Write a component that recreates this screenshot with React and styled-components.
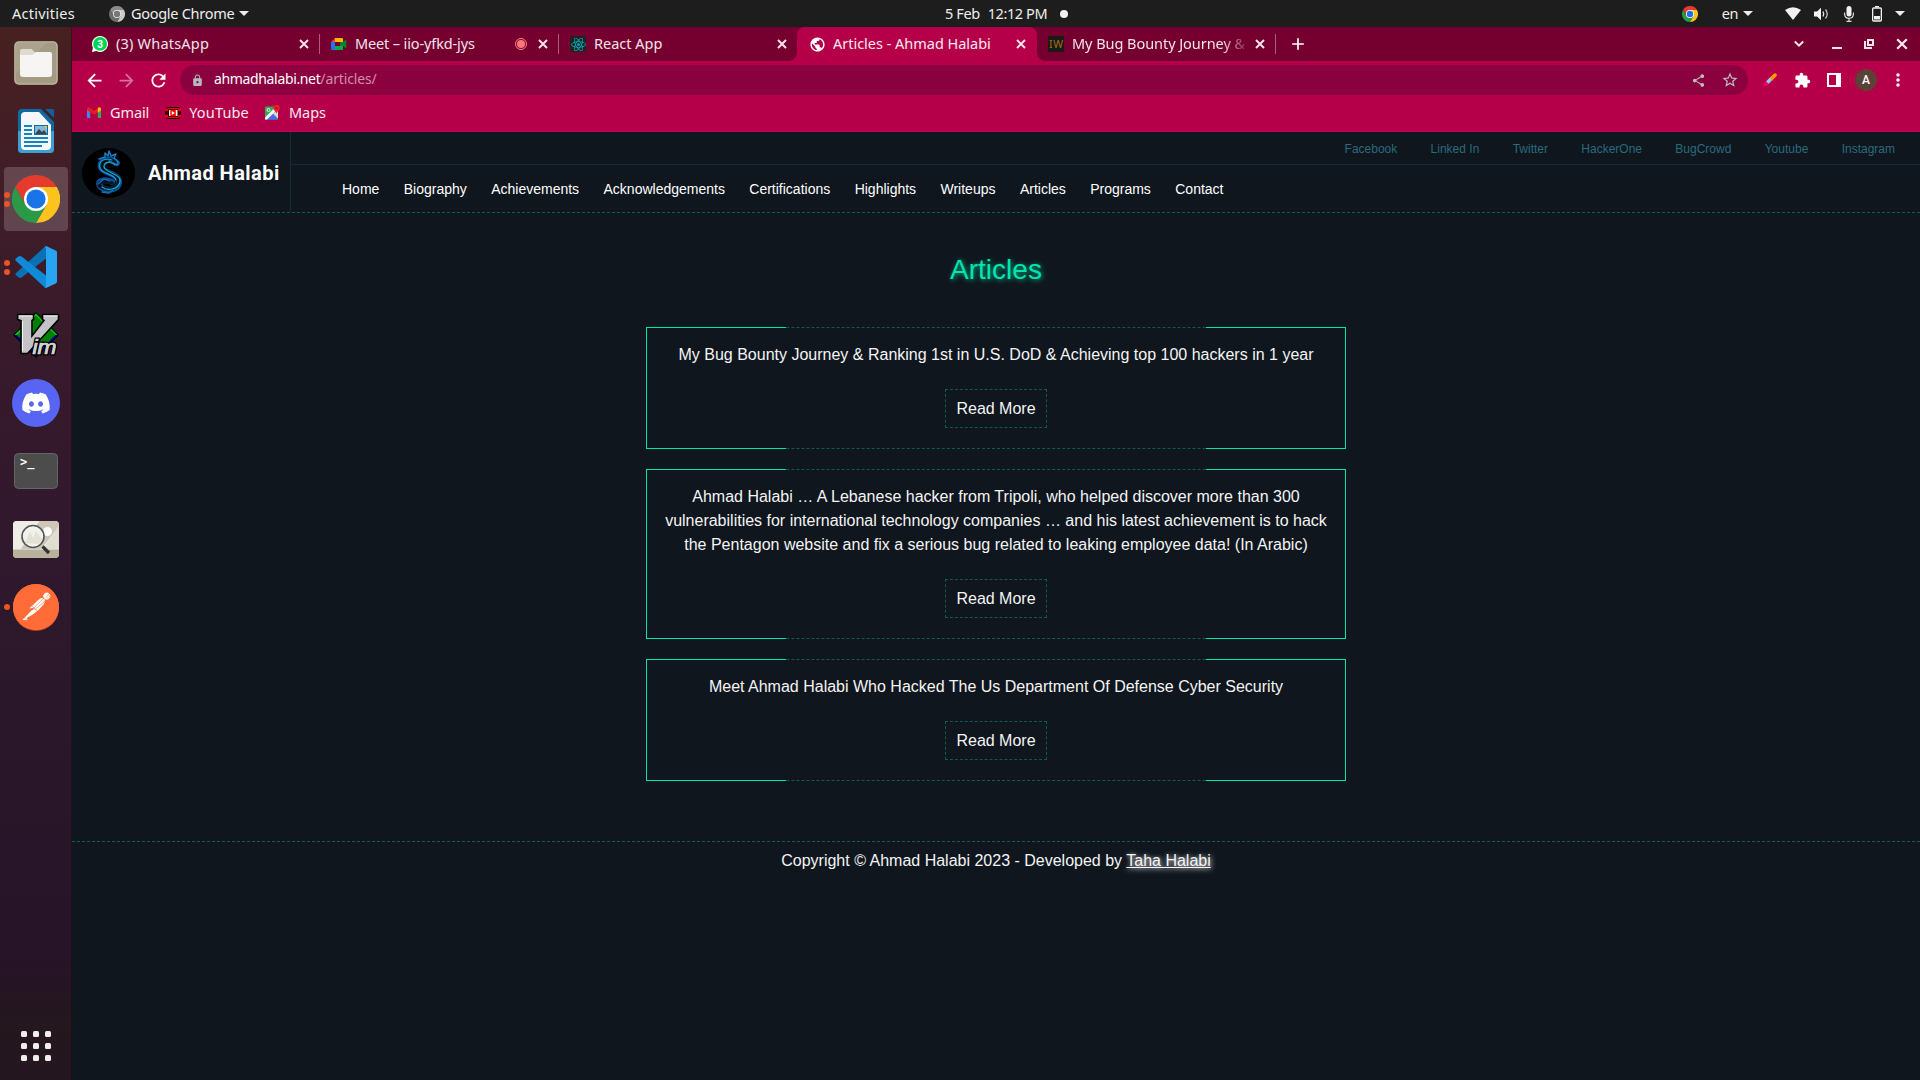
import React from "react";
import styled, { createGlobalStyle, css } from "styled-components";
import {
  MdArrowBack, MdArrowForward, MdRefresh, MdLock, MdShare, MdStarBorder,
  MdExtension, MdMoreVert, MdPublic, MdAdd,
} from "react-icons/md";
import { FaDiscord, FaReact } from "react-icons/fa";
import { SiPostman } from "react-icons/si";

const Global = createGlobalStyle`
  *, *::before, *::after { box-sizing: border-box; }
  html, body { margin: 0; padding: 0; background: #0f161e; overflow: hidden; }
  svg { display: block; flex: none; }
`;

const uiFont = css`
  font-family: "Noto Sans", "Open Sans", sans-serif;
  font-size: ${(p) => p.$size || 14.5}px;
  line-height: 20px;
  padding-bottom: 2px;
  white-space: pre;
`;

const Desktop = styled.div`
  width: 1920px;
  height: 1080px;
  display: flex;
  flex-direction: column;
  overflow: hidden;
`;

/* ---------- system bar ---------- */
const TopBar = styled.header`
  height: 27px;
  flex: none;
  display: flex;
  align-items: center;
  background: #1d1d1d;
  color: #eeeeec;
  padding-left: 12px;
  padding-right: 15px;
`;
const BarLeft = styled.div`
  width: 933px;
  display: flex;
  align-items: center;
`;
const Label = styled.span`
  ${uiFont}
  letter-spacing: ${(p) => p.$track || 0}px;
  margin-left: ${(p) => p.$left || 0}px;
`;
const Host = styled(Label)`
  color: #fff;
`;
const Glyph = styled.span`
  flex: none;
  display: flex;
  margin-left: ${(p) => p.$left || 0}px;
`;
const Triangle = styled.span`
  border: 5px solid transparent;
  border-top-color: #eeeeec;
  border-bottom: 0;
  margin-left: ${(p) => p.$left}px;
`;
const BusyDot = styled.span`
  width: 8px;
  height: 8px;
  border-radius: 50%;
  background: #f2f2f2;
  margin-left: 13px;
`;
const Tray = styled.div`
  margin-left: auto;
  display: flex;
  align-items: center;
`;

/* ---------- dock ---------- */
const Workspace = styled.div`
  flex: 1;
  display: flex;
  min-height: 0;
`;
const Dock = styled.nav`
  width: 72px;
  flex: none;
  padding: 4px 0 11px 4px;
  display: flex;
  flex-direction: column;
  gap: 4px;
  background: linear-gradient(#47201f 0, #421e27 12%, #381a2b 30%, #30182d 50%, #2a172a 65%, #271428 88%, #24171e 94%, #23161e 100%);
  border-right: 1px solid rgba(20, 8, 20, 0.45);
`;
const DockItem = styled.div`
  width: 64px;
  height: 64px;
  border-radius: 4px;
  position: relative;
  display: flex;
  align-items: center;
  justify-content: center;
  background: ${(p) => (p.$active ? "rgba(255,255,255,0.18)" : "transparent")};
`;
const Running = styled.span`
  position: absolute;
  left: 0;
  top: 0;
  height: 64px;
  display: flex;
  flex-direction: column;
  justify-content: center;
  gap: 3px;
`;
const RunDot = styled.i`
  width: 6px;
  height: 6px;
  border-radius: 50%;
  background: #e95420;
`;
const AppGrid = styled.div`
  margin: auto 0 8px 17px;
  display: grid;
  grid-template-columns: repeat(3, 6px);
  gap: 6px;
`;
const AppGridDot = styled.i`
  height: 6px;
  border-radius: 1.5px;
  background: #f0efec;
`;
const DiscordDisc = styled.div`
  width: 48px;
  height: 48px;
  border-radius: 50%;
  background: #5865f2;
  color: #fff;
  display: flex;
  align-items: center;
  justify-content: center;
`;
const PostmanDisc = styled.div`
  width: 46px;
  height: 46px;
  margin-bottom: 1px;
  border-radius: 50%;
  background: radial-gradient(#fff 62%, #ff6c37 63%);
  color: #ff6c37;
  box-shadow: 0 1px 0 #b9431b;
`;

/* ---------- browser ---------- */
const Browser = styled.main`
  flex: 1;
  min-width: 0;
  display: flex;
  flex-direction: column;
`;
const TabStrip = styled.div`
  height: 34px;
  flex: none;
  display: flex;
  background: #75002f;
  padding-left: 9px;
`;
const Tab = styled.div`
  width: 239px;
  height: 34px;
  padding: 0 8px 0 11px;
  display: flex;
  align-items: center;
  position: relative;
  color: ${(p) => (p.$active ? "#fbe9f0" : "#f3e3ea")};
  background: ${(p) => (p.$active ? "#b50049" : "transparent")};
  border-radius: 8px 8px 0 0;
  ${(p) =>
    p.$active &&
    css`
      margin-left: -1px;
      width: 240px;
      padding-left: 12px;
      &::before,
      &::after {
        content: "";
        position: absolute;
        bottom: 0;
        width: 8px;
        height: 8px;
      }
      &::before {
        left: -8px;
        background: radial-gradient(circle at 0 0, transparent 7.5px, #b50049 8px);
      }
      &::after {
        right: -8px;
        background: radial-gradient(circle at 100% 0, transparent 7.5px, #b50049 8px);
      }
    `}
  ${(p) =>
    p.$divider &&
    css`
      &::after {
        content: "";
        position: absolute;
        right: 0;
        top: 7px;
        width: 1px;
        height: 20px;
        background: #ab5d7e;
      }
    `}
`;
const TabTitle = styled.span`
  ${uiFont}
  flex: 1;
  min-width: 0;
  overflow: hidden;
  margin-left: 8px;
  letter-spacing: ${(p) => p.$track || 0}px;
  ${(p) =>
    p.$fade &&
    css`
      mask-image: linear-gradient(to right, #000 150px, rgba(0, 0, 0, 0.15) 174px);
    `}
`;
const Favicon = styled.span`
  width: 16px;
  height: 16px;
  flex: none;
  display: flex;
  align-items: center;
  justify-content: center;
  border-radius: ${(p) => p.$round || 0}px;
  background: ${(p) => p.$bg || "transparent"};
  color: ${(p) => p.$color || "#fff"};
`;
const IconCell = styled.span`
  width: 16px;
  height: 16px;
  display: flex;
  align-items: center;
  justify-content: center;
`;
const WindowButtons = styled.div`
  margin-left: auto;
  display: flex;
  align-items: center;
  padding-right: 12px;
`;
const NewTab = styled.div`
  display: flex;
  align-items: center;
  margin-left: 12px;
`;
const Toolbar = styled.div`
  height: 38px;
  flex: none;
  background: #b50049;
  display: flex;
  align-items: center;
  gap: 6px;
  padding: 0 6px;
`;
const ButtonGroup = styled.div`
  display: flex;
`;
const IconButton = styled.span`
  width: 32px;
  height: 30px;
  display: flex;
  align-items: center;
  justify-content: center;
  color: ${(p) => p.$color || "#fff"};
`;
const Omnibox = styled.div`
  flex: 1;
  height: 30px;
  border-radius: 15px;
  background: #8b003f;
  display: flex;
  align-items: center;
  padding: 0 2px 0 11px;
`;
const Path = styled.span`
  ${uiFont}
  color: #cf8fab;
  flex: 1;
  letter-spacing: -0.14px;
`;
const Avatar = styled.span`
  width: 22px;
  height: 22px;
  border-radius: 50%;
  background: #5d4037;
  color: #fff;
  font: 500 12px/22px Roboto, sans-serif;
  text-align: center;
`;
const PanelIcon = styled.span`
  width: 14px;
  height: 14px;
  border: 2px solid #fff;
  border-right-width: 5px;
`;
const Bookmarks = styled.div`
  height: 33px;
  flex: none;
  display: flex;
  align-items: center;
  padding: 0 0 5px 14px;
  background: #b50049;
  border-bottom: 1px solid #c4005f;
  color: #fbe9f0;
`;

/* ---------- site ---------- */
const Site = styled.div`
  flex: 1;
  background: #0f161e;
  color: #f4f4f4;
  font: 16px/24px "Liberation Sans", Arial, sans-serif;
`;
const SiteHeader = styled.header`
  height: 81px;
  display: flex;
  border-bottom: 1px dashed #0c5a50;
`;
const Brand = styled.div`
  width: 219px;
  border-right: 1px solid #1a2a35;
  display: flex;
  align-items: center;
  padding: 2px 0 0 10px;
`;
const BrandName = styled.span`
  margin-left: 13px;
  font: 700 20px/24px Roboto, sans-serif;
  letter-spacing: ${(p) => p.$track}px;
  color: #fff;
  white-space: nowrap;
`;
const HeaderRight = styled.div`
  flex: 1;
  display: flex;
  flex-direction: column;
`;
const Socials = styled.div`
  height: 33px;
  border-bottom: 1px solid #152a35;
  display: flex;
  justify-content: flex-end;
  align-items: center;
  gap: 33.33px;
  padding: 2px 25px 0 0;
  font-size: 12px;
  color: #296b7c;
`;
const Menu = styled.nav`
  flex: 1;
  display: flex;
  align-items: center;
  gap: 24.4px;
  padding: 0 0 0 51px;
  font-size: 14px;
  color: #fff;
`;
const Heading = styled.h1`
  margin: 36px 0 36px;
  text-align: center;
  font-weight: 400;
  font-size: 28px;
  line-height: 42px;
  color: #00e5b0;
  text-shadow: 1px 1px 5px #00b58c;
`;
const CardList = styled.section`
  width: 700px;
  margin: 0 auto 60px;
  display: flex;
  flex-direction: column;
  gap: 20px;
`;
const Card = styled.article`
  position: relative;
  border: 1px dashed #0d5a4f;
  padding: 15px 15px 20px;
  display: flex;
  flex-direction: column;
  align-items: center;
  text-align: center;
  gap: 22px;
  &::before,
  &::after {
    content: "";
    position: absolute;
    top: -1px;
    bottom: -1px;
    width: 140px;
    border: 1px solid #00e5b0;
  }
  &::before { left: -1px; border-right: 0; }
  &::after { right: -1px; border-left: 0; }
`;
const ReadMore = styled.a`
  height: 39px;
  padding: 0 10px;
  line-height: 37px;
  border: 1px dashed #0d5a4f;
`;
const Footer = styled.footer`
  border-top: 1px dashed #0d5a4f;
  padding-top: 7px;
  text-align: center;
`;
const Author = styled.a`
  text-decoration: underline;
  text-shadow: 1px 1px 5px #fff;
`;

/* ---------- drawings ---------- */
const ChromeLogo = ({ size, mono }) => {
  const c = mono ? ["#8a8a8a", "#c9c9c9", "#6d6d6d", "#777"] : ["#e33b2e", "#fcc31e", "#2a9a48", "#1a73e8"];
  return (
    <svg width={size} height={size} viewBox="0 0 48 48">
      <path d="M3.2 12A24 24 0 0 1 44.8 12H24L13.6 30Z" fill={c[0]} />
      <path d="M44.8 12A24 24 0 0 1 24 48L34.4 30 24 12Z" fill={c[1]} />
      <path d="M24 48A24 24 0 0 1 3.2 12L13.6 30 34.4 30Z" fill={c[2]} />
      <circle cx="24" cy="24" r="12" fill={mono ? "#eee" : "#fff"} />
      <circle cx="24" cy="24" r="9.6" fill={c[3]} />
    </svg>
  );
};
const Files = () => (
  <svg width="46" height="46" viewBox="0 0 46 46">
    <rect x="1" y="1" width="44" height="44" rx="5" fill="#8f876f" />
    <rect x="2" y="2" width="42" height="42" rx="4" fill="#a39b84" stroke="#bdb6a2" />
    <path d="M2.5 34V6a3.500 3.500 0 0 1 3.500-3.500H34Z" fill="#aea792" opacity=".7" />
    <path d="M7 14V11a2 2 0 0 1 2-2h9.500l4 4H22v4H7Z" fill="#dedad0" />
    <path d="M7 15h12l4-3h14a2 2 0 0 1 2 2v20a3 3 0 0 1-3 3H10a3 3 0 0 1-3-3Z" fill="#f6f5f4" />
  </svg>
);
const Writer = () => (
  <svg width="38" height="46" viewBox="0 0 38 46">
    <rect x="1" y="1" width="36" height="44" rx="4" fill="#0f6aa3" />
    <path d="M1 23H37V41a4 4 0 0 1-4 4H5a4 4 0 0 1-4-4Z" fill="#3f9fd0" />
    <path d="M23 0H38V15Z" fill="#421f26" />
    <path d="M28 1H35.500a1.500 1.500 0 0 1 1.500 1.500V10Z" fill="#0f6299" />
    <path d="M4 8a4 4 0 0 1 4-4H22L34 17V38a4 4 0 0 1-4 4H8a4 4 0 0 1-4-4Z" fill="#f5f8fa" />
    <path d="M7 18h8M7 22h8M7 26h8M7 30h24M7 34h24M7 38h18" stroke="#1583bd" strokeWidth="2" />
    <rect x="17.500" y="17.500" width="13" height="9" fill="#7fb9dc" stroke="#0d6ca5" />
    <path d="M18 26l4-5 3 3 2-2 3 4Z" fill="#3d4347" />
    <path d="M27 18h3v3Z" fill="#f4c430" />
  </svg>
);
const VSCode = () => (
  <svg width="42" height="42" viewBox="0 0 42 42">
    <path d="M0.500 27.500 29 1.500Q30 .500 31 0V12.500L6.500 31.500Q5 32.500 3.500 31.300L.8 29Q0 28.200.5 27.500Z" fill="#0a71b5" />
    <path d="M.8 12.600 3.500 10.400Q5 9.500 6.500 10.500L31 29.500V42Q30 41.800 29 40.700L.5 14.500Q0 13.400.8 12.600Z" fill="#0f8ad8" />
    <path d="M31 0 40.700 4.600Q42 5.300 42 6.600V35.400Q42 36.700 40.700 37.400L31 42Q29.800 41.700 29 40.700 31 41.600 31 39.500V2.500Q31 .4 29 1.300Z" fill="#27a4f2" />
  </svg>
);
const Vim = () => (
  <svg width="48" height="48" viewBox="0 0 48 48">
    <path d="M24 1 47 24 24 47 1 24Z" fill="#000" />
    <path d="M24 2.500 45.500 24H2.500Z" fill="#00d000" />
    <path d="M2.500 24H45.500L24 45.500Z" fill="#0000a0" />
    <path d="M24 4.500 43.500 24 24 43 5 24Z" fill="#008000" />
    <path d="M6 3.500H21.500V8.500L20 9.500V25L32 9.500 30.500 8.500V3.500H46.500V8.500L15.500 42.500H9V9.500L5.500 8.500Z" fill="#c4c4c8" stroke="#000" strokeWidth="1.600" />
    <path d="M6.500 5H20.500M31.500 5H45.500M10.500 10V40" stroke="#f4f4f4" />
    <text x="20.500" y="42.500" fontFamily="Liberation Sans" fontStyle="italic" fontWeight="400" fontSize="20" fill="#d0d0d4" stroke="#000" strokeWidth="3" paintOrder="stroke" textLength="24" lengthAdjust="spacingAndGlyphs">im</text>
    <text x="20.500" y="42.500" fontFamily="Liberation Sans" fontStyle="italic" fontWeight="400" fontSize="20" fill="#d0d0d4" stroke="#d0d0d4" strokeWidth=".7" textLength="24" lengthAdjust="spacingAndGlyphs" aria-hidden="true">im</text>
  </svg>
);
const Terminal = () => (
  <svg width="46" height="38" viewBox="0 0 46 38">
    <rect x="1.500" y="1.500" width="43" height="35" rx="4" fill="#4c4c4c" stroke="#666" />
    <text x="7" y="14" fontFamily="DejaVu Sans Mono" fontWeight="700" fontSize="12" fill="#fff">&gt;_</text>
  </svg>
);
const Viewer = () => (
  <svg width="46" height="38" viewBox="0 0 46 38">
    <defs>
      <clipPath id="viewerFrame"><rect y="1" width="46" height="37" rx="4" /></clipPath>
    </defs>
    <g clipPath="url(#viewerFrame)">
      <rect width="46" height="38" fill="#efeee6" />
      <path d="M27 0H46V7L28 29H0L14 14Z" fill="#ccc7b8" />
      <path d="M0 0H27L8 29H0Z" fill="#efeee6" />
      <path d="M46 5V29H30Z" fill="#e0ddd1" />
      <circle cx="34.500" cy="11.500" r="4.500" fill="#fbfbf9" />
      <rect y="29.500" width="46" height="9" fill="#b8b19c" />
    </g>
    <circle cx="20" cy="16.500" r="11" fill="#f2f2ec" stroke="#555" strokeWidth="1.600" />
    <path d="M12 23 17 11 20 18 23 11 29 19 26 24Z" fill="#dcdccf" opacity=".7" />
    <path d="M29.500 26.500 36 33" stroke="#333" strokeWidth="3.200" />
  </svg>
);
const Dragon = () => (
  <svg width="53" height="50" viewBox="0 0 53 50">
    <ellipse cx="26.500" cy="25" rx="26.500" ry="25" fill="#000" />
    <g fill="none" strokeLinecap="round" strokeLinejoin="round">
      <path d="M35 15C29 9 18 11 18.500 18S37 25 37 34 22 44 18 38 24 31 30 34" stroke="#0a4f9c" strokeWidth="6" />
      <path d="M34 15C29 10 20 11 20 18S38 25 36.500 34 22 42 18 38 24 32 30 35" stroke="#04121e" strokeWidth="3.500" />
      <path d="M33 17C28 13 22 14 22 19S40 26 38 34 25 43 20 39" stroke="#13b4d4" strokeWidth="1.200" />
      <path d="M30 12C22 9 16 14 18 20S33 26 34 32" stroke="#1c9ad0" strokeWidth="1.200" />
      <path d="M17 11 23 9 23 5 26 8 27 3 29 8 34 6 32 10 36 14 35 17 31 15 27 13" stroke="#177fc4" strokeWidth="1.500" />
      <path d="M20 44 27 45 31 42M16 36 22 31 28 33" stroke="#1671bd" strokeWidth="1.300" />
    </g>
  </svg>
);
const WhatsApp = () => (
  <svg width="16" height="16" viewBox="0 0 16 16">
    <path d="M8 0a8 8 0 1 1-3.700 15.100L0 16 .9 11.700A8 8 0 0 1 8 0Z" fill="#fff" />
    <circle cx="8.100" cy="7.900" r="6.900" fill="#00d757" />
    <text x="8" y="11.600" textAnchor="middle" fontFamily="Roboto" fontWeight="700" fontSize="10" fill="#fff">3</text>
  </svg>
);
const Meet = () => (
  <svg width="16" height="14" viewBox="0 0 16 14">
    <path d="M4 1H11a1 1 0 0 1 1 1V5H4Z" fill="#ffba00" />
    <path d="M0 5 4 1V5Z" fill="#ea4335" />
    <path d="M0 5H4V13H1.200A1.200 1.200 0 0 1 0 11.800Z" fill="#2a6df4" />
    <path d="M4 9H12V12a1 1 0 0 1-1 1H4Z" fill="#00ac47" />
    <path d="M12 5 15.300 2.300V11.700L12 9Z" fill="#00832d" />
    <path d="M4 5H9V9H4Z" fill="#75002f" />
    <path d="M9 5H12V9H9Z" fill="#00832d" />
  </svg>
);
const Recording = () => (
  <svg width="12" height="12" viewBox="0 0 12 12">
    <circle cx="6" cy="6" r="5.500" fill="none" stroke="#ff8080" />
    <circle cx="6" cy="6" r="4" fill="#ff7676" />
  </svg>
);
const Gmail = () => (
  <svg width="14" height="11" viewBox="0 0 14 11">
    <path d="M0 2V11H3.200V4Z" fill="#4285f4" />
    <path d="M10.800 4V11H14V2Z" fill="#34a853" />
    <path d="M0 1.500Q1.200-.5 3.200 1L7 4 10.800 1V5L7 7.800 0 3Z" fill="#ea1c1c" />
    <path d="M10.800 1Q13-.5 14 1.500V3.500L10.800 5.500Z" fill="#fbbc04" />
  </svg>
);
const YouTube = () => (
  <svg width="16" height="12" viewBox="0 0 16 12">
    <rect x="1" y="0" width="14" height="12" rx="2" fill="#1c0206" />
    <path d="M0 3H3M0 9H3M13 3H16M13 9H16" stroke="#f00" strokeWidth="1.600" />
    <rect x="1.600" y="1.600" width="12.800" height="8.800" rx="1.500" fill="none" stroke="#f00" strokeWidth="1.200" />
    <path d="M1 4.200V7.800M15 4.200V7.800" stroke="#1c0206" strokeWidth="2" />
    <rect x="4" y="3" width="8.500" height="6" fill="#fff" />
    <rect x="5.300" y="3" width="5.500" height="6" fill="#f00" />
    <path d="M6.800 4 9.800 6 6.800 8Z" fill="#fff" />
  </svg>
);
const Maps = () => (
  <svg width="15" height="15" viewBox="0 0 15 15">
    <rect y="1.500" width="13" height="13" rx="1" fill="#34a853" />
    <path d="M0 14.500 7 7.500 13 14.500Z" fill="#4b6df5" />
    <path d="M0 12.500 11 1.500H13V4L2 14.500H0Z" fill="#f5f5f5" />
    <path d="M8 8.500 13 13.500V5Z" fill="#ddd" />
    <circle cx="3.500" cy="5" r="1.500" fill="none" stroke="#fff" strokeWidth=".8" />
    <path d="M11.500 0A3.200 3.200 0 0 1 14.700 3.200C14.700 5.500 12 6 11.500 9 11 6 8.300 5.500 8.300 3.200A3.200 3.200 0 0 1 11.500 0Z" fill="#f0202d" />
    <circle cx="11.500" cy="3.200" r="1.100" fill="#9c1016" />
  </svg>
);
const Brush = () => (
  <svg width="14" height="14" viewBox="0 0 14 14">
    <path d="M6.300 5 10.500 1Q12.500-.3 13.500 1T13 3.700L8.900 7.700Z" fill="#ff9800" />
    <path d="M3 8.500 6.600 4.800 9.100 7.200 5.500 11Z" fill="#90caf9" />
    <path d="M.5 13.500Q.5 9.300 3 8.500L5.500 11Q4.300 13.300.5 13.500Z" fill="#f50057" />
  </svg>
);
const Wifi = () => (
  <svg width="16" height="13" viewBox="0 0 16 13">
    <path d="M0 3Q8-2.600 16 3L8 13Z" fill="#f2f2f2" />
  </svg>
);
const Volume = () => (
  <svg width="15" height="14" viewBox="0 0 15 14">
    <path d="M0 4.500H3L7 .8V13.200L3 9.500H0Z" fill="#f2f2f2" />
    <path d="M9 4.500Q10.500 7 9 9.500" fill="none" stroke="#f2f2f2" strokeWidth="1.300" />
    <path d="M11.500 2.500Q15 7 11.500 11.500" fill="none" stroke="#c0c0c0" strokeWidth="1.300" />
  </svg>
);
const Mic = () => (
  <svg width="10" height="16" viewBox="0 0 10 16">
    <rect x="2.500" y="0" width="5" height="10.500" rx="2.500" fill="#f2f2f2" />
    <path d="M.6 6.500V8Q.6 12.300 5 12.300T9.400 8V6.500M5 12.300V15.300M2.500 15.300H7.500" fill="none" stroke="#d8d8d8" strokeWidth="1.200" />
  </svg>
);
const Battery = () => (
  <svg width="10" height="16" viewBox="0 0 10 16">
    <rect x=".65" y="2" width="8.700" height="13" rx="1" fill="none" stroke="#f2f2f2" strokeWidth="1.300" />
    <path d="M3 .7H7" stroke="#f2f2f2" strokeWidth="1.400" />
    <rect x="2" y="10" width="6" height="3.500" fill="#f2f2f2" />
  </svg>
);
const Chevron = () => (
  <svg width="10" height="8" viewBox="0 0 10 8">
    <path d="M.8 1.500 5 5.700 9.200 1.500" fill="none" stroke="#f3e3ea" strokeWidth="2" />
  </svg>
);
const Minimize = () => (
  <svg width="10" height="10" viewBox="0 0 10 10">
    <path d="M0 9H10" stroke="#f3e3ea" strokeWidth="2" />
  </svg>
);
const Restore = () => (
  <svg width="10" height="10" viewBox="0 0 10 10">
    <path d="M4 1H9V6H4Z" fill="none" stroke="#f3e3ea" strokeWidth="2" />
    <path d="M1 2V9H8" fill="none" stroke="#f3e3ea" strokeWidth="2" />
  </svg>
);
const Cross = ({ size = 10 }) => (
  <svg width={size} height={size} viewBox="0 0 10 10">
    <path d="M1 1 9 9M9 1 1 9" stroke="#f6e6ec" strokeWidth="1.900" />
  </svg>
);
const InfoWriteups = () => (
  <svg width="16" height="16" viewBox="0 0 16 16">
    <rect width="16" height="16" fill="#191919" />
    <text x="1" y="12" fontFamily="Noto Sans" fontSize="10.500" fill="#a8700c" textLength="14">IW</text>
  </svg>
);

/* ---------- data ---------- */
const dockItems = [
  { icon: <Files /> },
  { icon: <Writer /> },
  { icon: <ChromeLogo size={48} />, running: 2, active: true },
  { icon: <VSCode />, running: 2 },
  { icon: <Vim /> },
  { icon: <DiscordDisc><FaDiscord size={30} /></DiscordDisc> },
  { icon: <Terminal /> },
  { icon: <Viewer /> },
  { icon: <PostmanDisc><SiPostman size={46} /></PostmanDisc>, running: 1 },
];
const tabs = [
  { title: "(3) WhatsApp", track: 0.2, icon: <Favicon><WhatsApp /></Favicon>, divider: true },
  { title: "Meet – iio-yfkd-jys", track: -0.13, icon: <Favicon><Meet /></Favicon>, recording: true, divider: true },
  { title: "React App", track: 0, icon: <Favicon $bg="#222" $round={1} $color="#00b8cc"><FaReact size={15} /></Favicon> },
  { title: "Articles - Ahmad Halabi", track: -0.02, icon: <Favicon><MdPublic size={17} /></Favicon>, active: true },
  { title: "My Bug Bounty Journey &", track: -0.05, icon: <Favicon><InfoWriteups /></Favicon>, fade: true, divider: true },
];
const socials = ["Facebook", "Linked In", "Twitter", "HackerOne", "BugCrowd", "Youtube", "Instagram"];
const menu = ["Home", "Biography", "Achievements", "Acknowledgements", "Certifications", "Highlights", "Writeups", "Articles", "Programs", "Contact"];
const articles = [
  "My Bug Bounty Journey & Ranking 1st in U.S. DoD & Achieving top 100 hackers in 1 year",
  "Ahmad Halabi … A Lebanese hacker from Tripoli, who helped discover more than 300 vulnerabilities for international technology companies … and his latest achievement is to hack the Pentagon website and fix a serious bug related to leaking employee data! (In Arabic)",
  "Meet Ahmad Halabi Who Hacked The Us Department Of Defense Cyber Security",
];

export default function App() {
  return (
    <Desktop>
      <Global />
      <TopBar>
        <BarLeft>
          <Label $track={0.25}>Activities</Label>
          <Glyph $left={34}><ChromeLogo size={16} mono /></Glyph>
          <Label $left={6} $track={-0.28}>Google Chrome</Label>
          <Triangle $left={5} />
        </BarLeft>
        <Label $track={-0.4}>5 Feb</Label>
        <Label $left={8} $track={-0.4}>12:12 PM</Label>
        <BusyDot />
        <Tray>
          <Glyph><ChromeLogo size={16} /></Glyph>
          <Label $left={24} $track={-0.4}>en</Label>
          <Triangle $left={5} />
          <Glyph $left={32}><Wifi /></Glyph>
          <Glyph $left={13}><Volume /></Glyph>
          <Glyph $left={15}><Mic /></Glyph>
          <Glyph $left={18}><Battery /></Glyph>
          <Triangle $left={13} />
        </Tray>
      </TopBar>
      <Workspace>
        <Dock>
          {dockItems.map((item, i) => (
            <DockItem key={i} $active={item.active}>
              {item.running && (
                <Running>
                  {Array.from({ length: item.running }, (_, n) => <RunDot key={n} />)}
                </Running>
              )}
              {item.icon}
            </DockItem>
          ))}
          <AppGrid>
            {Array.from({ length: 9 }, (_, n) => <AppGridDot key={n} />)}
          </AppGrid>
        </Dock>
        <Browser>
          <TabStrip>
            {tabs.map((t) => (
              <Tab key={t.title} $active={t.active} $divider={t.divider}>
                {t.icon}
                <TabTitle $track={t.track} $fade={t.fade}>{t.title}</TabTitle>
                {t.recording && <Glyph><Recording /></Glyph>}
                <Glyph $left={t.recording ? 8 : 8}>
                  <IconCell><Cross /></IconCell>
                </Glyph>
              </Tab>
            ))}
            <NewTab>
              <MdAdd size={20} color="#fff" />
            </NewTab>
            <WindowButtons>
              <Glyph><Chevron /></Glyph>
              <Glyph $left={28}><Minimize /></Glyph>
              <Glyph $left={22}><Restore /></Glyph>
              <Glyph $left={22}><Cross size={12} /></Glyph>
            </WindowButtons>
          </TabStrip>
          <Toolbar>
            <ButtonGroup>
              <IconButton><MdArrowBack size={21} /></IconButton>
              <IconButton $color="#d6709a"><MdArrowForward size={21} /></IconButton>
              <IconButton><MdRefresh size={21} /></IconButton>
            </ButtonGroup>
            <Omnibox>
              <MdLock size={13} color="#b3b9bd" />
              <Host $size={14} $left={10} $track={-0.35}>ahmadhalabi.net</Host>
              <Path $size={14}>/articles/</Path>
              <IconButton $color="#c4bcc0"><MdShare size={15} /></IconButton>
              <IconButton $color="#c4bcc0"><MdStarBorder size={18} /></IconButton>
            </Omnibox>
            <ButtonGroup>
              <IconButton><Brush /></IconButton>
              <IconButton><MdExtension size={17} /></IconButton>
              <IconButton><PanelIcon /></IconButton>
              <IconButton><Avatar>A</Avatar></IconButton>
              <IconButton><MdMoreVert size={20} /></IconButton>
            </ButtonGroup>
          </Toolbar>
          <Bookmarks>
            <Glyph $left={1}><Gmail /></Glyph>
            <Label $left={9} $track={-0.1}>Gmail</Label>
            <Glyph $left={16}><YouTube /></Glyph>
            <Label $left={8} $track={0.15}>YouTube</Label>
            <Glyph $left={16}><Maps /></Glyph>
            <Label $left={9} $track={0}>Maps</Label>
          </Bookmarks>
          <Site>
            <SiteHeader>
              <Brand>
                <Dragon />
                <BrandName $track={0.45}>Ahmad Halabi</BrandName>
              </Brand>
              <HeaderRight>
                <Socials>{socials.map((s) => <a key={s}>{s}</a>)}</Socials>
                <Menu>{menu.map((m) => <a key={m}>{m}</a>)}</Menu>
              </HeaderRight>
            </SiteHeader>
            <Heading>Articles</Heading>
            <CardList>
              {articles.map((text) => (
                <Card key={text}>
                  <span>{text}</span>
                  <ReadMore>Read More</ReadMore>
                </Card>
              ))}
            </CardList>
            <Footer>
              Copyright © Ahmad Halabi 2023 - Developed by <Author>Taha Halabi</Author>
            </Footer>
          </Site>
        </Browser>
      </Workspace>
    </Desktop>
  );
}
